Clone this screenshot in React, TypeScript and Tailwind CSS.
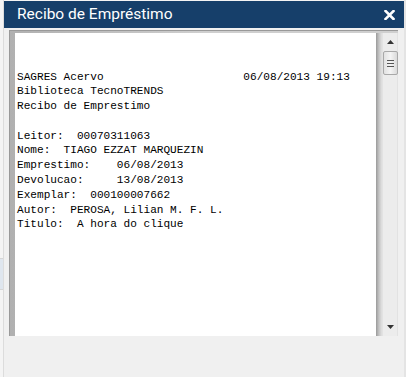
import React from "react";

const lines = [
  "SAGRES Acervo                     06/08/2013 19:13",
  "Biblioteca TecnoTRENDS",
  "Recibo de Emprestimo",
  "",
  "Leitor:  00070311063",
  "Nome:  TIAGO EZZAT MARQUEZIN",
  "Emprestimo:    06/08/2013",
  "Devolucao:     13/08/2013",
  "Exemplar:  000100007662",
  "Autor:  PEROSA, Lilian M. F. L.",
  "Titulo:  A hora do clique",
];

export default function App() {
  return (
    <div className="relative w-[406px] h-[377px] overflow-hidden bg-[#f4f4f4] flex">
      {/* left page strip */}
      <div className="w-[4px] h-full flex flex-col border-r border-[#dcdcdc]">
        <div className="h-[258px]" />
        <div className="h-[1px] bg-[#d6d6d6]" />
        <div className="h-[30px] bg-[#dfe6ee]" />
        <div className="h-[1px] bg-[#d6d6d6]" />
      </div>
      {/* dialog */}
      <div className="mt-[1px] w-[400px] h-[376px] flex flex-col bg-[#f0f0f0]">
        <div className="h-[27px] bg-[#163f6a] flex items-center justify-between pl-[13px] pr-[9px]">
          <span
            className="text-white text-[15.5px] leading-none"
            style={{ fontFamily: 'Roboto, "Noto Sans", sans-serif' }}
          >
            Recibo de Empréstimo
          </span>
          <svg width="11" height="10" viewBox="0 0 11 10">
            <path d="M1.5 1 L9.5 9 M9.5 1 L1.5 9" stroke="white" strokeWidth="2.6" strokeLinecap="square" />
          </svg>
        </div>
        <div className="pt-[2px] pl-[5px] pr-[7px] flex">
          {/* frame */}
          <div className="flex-1 h-[306px] flex border-t border-l border-[#999]">
            <div className="flex-1 flex flex-col pt-[2px] pl-[5px] bg-gradient-to-r from-[#b0b0b0] via-[#cfcfcf] to-[#cfcfcf]">
              <div className="flex-1 flex">
                <div
                  className="w-[361px] bg-white pt-[36.5px] pl-[2px] text-[11.1px] leading-[14.8px] text-black whitespace-pre"
                  style={{ fontFamily: '"Liberation Mono", "Courier New", monospace' }}
                >
                  {lines.map((l, i) => (
                    <div key={i} className="h-[14.8px]">
                      {l}
                    </div>
                  ))}
                </div>
                <div className="w-[6px] bg-gradient-to-r from-[#9a9a9a] via-[#c4c4c4] to-[#e2e2e2]" />
                {/* scrollbar */}
                <div className="w-[16px] bg-[#ececec] border-l border-r border-[#e2e2e2] flex flex-col items-center relative">
                  <div className="mt-[6px] h-[6px] flex items-center justify-center">
                    <svg width="7" height="4" viewBox="0 0 7 4">
                      <path d="M3.5 0 L7 4 L0 4 Z" fill="#333" />
                    </svg>
                  </div>
                  <div className="mt-[6px] w-[15px] h-[24px] rounded-[2px] border border-[#a8a8a8] bg-gradient-to-r from-[#e2e2e2] via-[#f4f4f4] to-[#dadada] flex flex-col items-center justify-center gap-[2px]">
                    <div className="w-[7px] h-[1px] bg-[#555]" />
                    <div className="w-[7px] h-[1px] bg-[#555]" />
                    <div className="w-[7px] h-[1px] bg-[#555]" />
                  </div>
                  <div className="absolute bottom-[7px] left-0 right-0 flex justify-center">
                    <svg width="7" height="4" viewBox="0 0 7 4">
                      <path d="M0 0 L7 0 L3.5 4 Z" fill="#333" />
                    </svg>
                  </div>
                </div>
              </div>
            </div>
          </div>
          <div className="w-[4px]" />
        </div>
      </div>
      <div className="w-[2px] h-full bg-[#e4e4e4]" />
    </div>
  );
}
